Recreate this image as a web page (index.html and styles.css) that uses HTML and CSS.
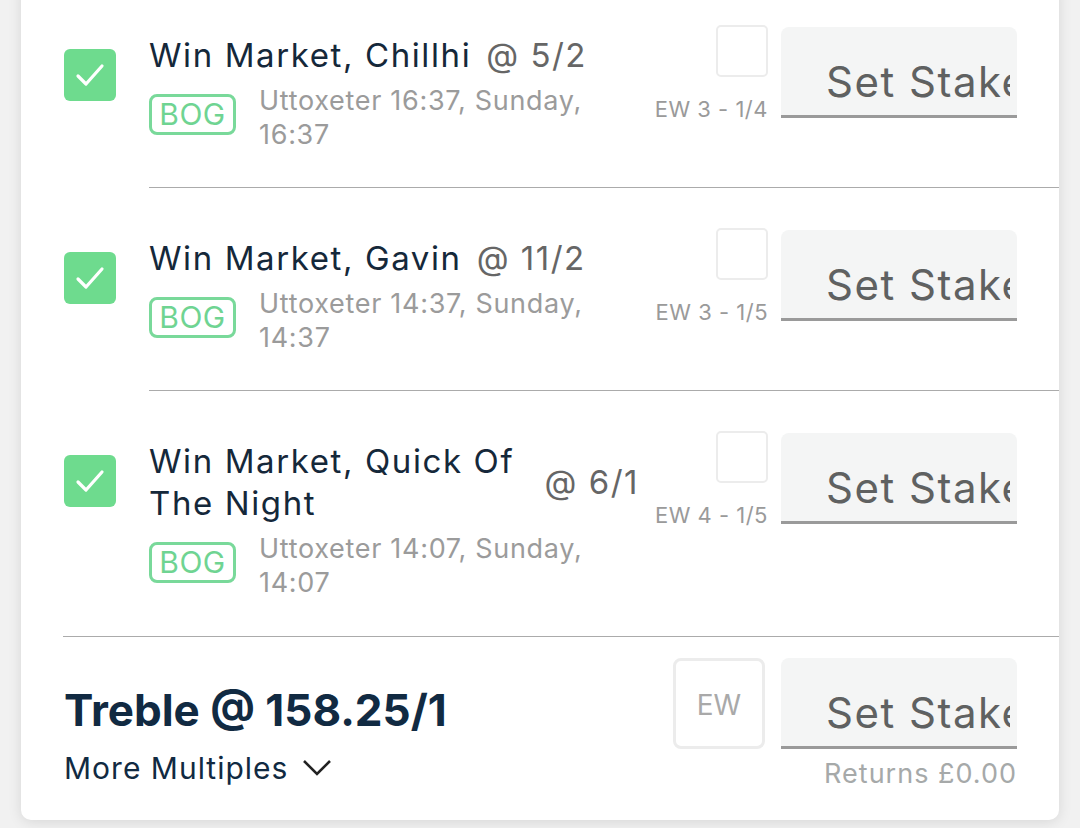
FILE: index.html
```html
<!DOCTYPE html>
<html lang="en">
<head>
<meta charset="utf-8">
<title>Bet slip</title>
<link rel="stylesheet" href="styles.css">
</head>
<body>
<div class="card">
  <div class="leg">
    <div class="leg-check"><span class="check"><svg viewBox="0 0 52 52" width="52" height="52"><polyline points="14,27 22,35 38,17" fill="none" stroke="#fff" stroke-width="3.2" stroke-linecap="round" stroke-linejoin="round"/></svg></span></div>
    <div class="leg-body">
      <div class="leg-info">
        <div class="leg-title"><span class="sel">Win Market, Chillhi</span><span class="odds">@ 5/2</span></div>
        <div class="leg-sub"><span class="bog">BOG</span><span class="meta">Uttoxeter 16:37, Sunday, 16:37</span></div>
      </div>
      <div class="ew">
        <span class="ew-box"></span>
        <span class="ew-terms">EW 3 - 1/4</span>
      </div>
      <div class="stake"><span class="stake-text">Set Stake</span></div>
    </div>
  </div>
  <div class="leg">
    <div class="leg-check"><span class="check"><svg viewBox="0 0 52 52" width="52" height="52"><polyline points="14,27 22,35 38,17" fill="none" stroke="#fff" stroke-width="3.2" stroke-linecap="round" stroke-linejoin="round"/></svg></span></div>
    <div class="leg-body">
      <div class="leg-info">
        <div class="leg-title"><span class="sel">Win Market, Gavin</span><span class="odds">@ 11/2</span></div>
        <div class="leg-sub"><span class="bog">BOG</span><span class="meta">Uttoxeter 14:37, Sunday, 14:37</span></div>
      </div>
      <div class="ew">
        <span class="ew-box"></span>
        <span class="ew-terms">EW 3 - 1/5</span>
      </div>
      <div class="stake"><span class="stake-text">Set Stake</span></div>
    </div>
  </div>
  <div class="leg leg-last">
    <div class="leg-check"><span class="check"><svg viewBox="0 0 52 52" width="52" height="52"><polyline points="14,27 22,35 38,17" fill="none" stroke="#fff" stroke-width="3.2" stroke-linecap="round" stroke-linejoin="round"/></svg></span></div>
    <div class="leg-body">
      <div class="leg-info">
        <div class="leg-title"><span class="sel">Win Market, Quick Of The Night</span><span class="odds">@ 6/1</span></div>
        <div class="leg-sub"><span class="bog">BOG</span><span class="meta">Uttoxeter 14:07, Sunday, 14:07</span></div>
      </div>
      <div class="ew">
        <span class="ew-box"></span>
        <span class="ew-terms">EW 4 - 1/5</span>
      </div>
      <div class="stake"><span class="stake-text">Set Stake</span></div>
    </div>
  </div>
  <div class="divider"></div>
  <div class="multi">
    <div class="multi-info">
      <div class="multi-title">Treble @ 158.25/1</div>
      <div class="more">More Multiples <svg class="chev" viewBox="0 0 30 18" width="30" height="18"><polyline points="2,2 15,15 28,2" fill="none" stroke="#222" stroke-width="2.6"/></svg></div>
    </div>
    <div class="ew-big">EW</div>
    <div class="stake-col">
      <div class="stake"><span class="stake-text">Set Stake</span></div>
      <div class="returns">Returns £0.00</div>
    </div>
  </div>
</div>
</body>
</html>
```
FILE: styles.css
```css
* { box-sizing: border-box; }
html, body { margin: 0; padding: 0; }
body {
  background: #f1f1f1;
  font-family: "Inter", "Noto Sans", sans-serif;
  height: 828px;
  overflow: hidden;
}
.card {
  margin: -15px 21px 0;
  background: #fff;
  border-radius: 0 0 10px 10px;
  box-shadow: 0 2px 14px rgba(0, 0, 0, 0.11);
}
.leg {
  display: flex;
  padding-left: 43px;
}
.leg-check {
  width: 52px;
  flex: none;
  margin-right: 33px;
  padding-top: 64px;
}
.check {
  display: block;
  width: 52px;
  height: 52px;
  border-radius: 6px;
  background: #6edb8e;
}
.check svg { display: block; }
.leg-body {
  flex: 1;
  display: flex;
  align-items: flex-start;
  padding: 40px 42px 35px 0;
  border-bottom: 1px solid #ababab;
}
.leg-last .leg-body { border-bottom: none; padding-bottom: 36px; }
.leg-info {
  flex: 1;
  min-width: 0;
  padding-top: 9px;
}
.leg-title {
  display: flex;
  align-items: center;
}
.sel {
  font-size: 33px;
  line-height: 42px;
  color: #15283a;
  letter-spacing: 1.6px;
}
.odds {
  flex: none;
  margin-left: 15px;
  font-size: 33px;
  line-height: 42px;
  color: #666;
  letter-spacing: 1.5px;
}
.leg-sub {
  display: flex;
  align-items: flex-start;
  margin-top: 8px;
}
.bog {
  flex: none;
  margin-top: 10px;
  width: 87px;
  height: 41px;
  border: 3px solid #79d99a;
  border-radius: 8px;
  color: #6fd492;
  font-size: 30px;
  line-height: 35px;
  letter-spacing: 0.5px;
  text-align: center;
  margin-right: 23px;
}
.meta {
  font-size: 27px;
  line-height: 34px;
  color: #9b9b9b;
  letter-spacing: 0.7px;
}
.ew {
  flex: none;
  display: flex;
  flex-direction: column;
  align-items: flex-end;
  margin-left: 16px;
}
.ew-box {
  display: block;
  width: 52px;
  height: 52px;
  border: 2px solid #ececec;
  border-radius: 5px;
  background: #fff;
}
.ew-terms {
  margin-top: 19px;
  font-size: 22px;
  line-height: 26px;
  color: #9a9a9a;
  letter-spacing: 0.5px;
  white-space: nowrap;
}
.stake {
  flex: none;
  width: 236px;
  height: 91px;
  margin-left: 13px;
  margin-top: 2px;
  padding: 25px 7px 0 45px;
  background: #f4f5f5;
  border-radius: 8px 8px 0 0;
  border-bottom: 3px solid #9a9a9a;
}
.stake-text {
  display: block;
  overflow: hidden;
  white-space: nowrap;
  font-size: 42px;
  line-height: 60px;
  letter-spacing: 1.5px;
  color: #5f6161;
}
.divider {
  height: 1px;
  background: #ababab;
  margin-left: 42px;
}
.multi {
  display: flex;
  align-items: flex-start;
  padding: 21px 42px 29px 43px;
}
.multi-info {
  flex: 1;
  padding-top: 26px;
}
.multi-title {
  font-size: 44px;
  font-weight: 700;
  line-height: 52px;
  color: #112a42;
}
.more {
  margin-top: 12px;
  display: flex;
  align-items: center;
  font-size: 30px;
  line-height: 40px;
  letter-spacing: 1px;
  color: #112a42;
}
.chev { margin-left: 14px; display: block; }
.ew-big {
  flex: none;
  width: 92px;
  height: 91px;
  border: 3px solid #ececec;
  border-radius: 8px;
  color: #a9a9a9;
  font-size: 28px;
  line-height: 88px;
  text-align: center;
  margin-right: 16px;
  margin-top: 0;
}
.stake-col {
  flex: none;
  width: 236px;
}
.stake-col .stake { margin: 0; }
.returns {
  margin-top: 8px;
  text-align: right;
  font-size: 27px;
  line-height: 34px;
  letter-spacing: 1px;
  color: #a6a9a9;
}
```
